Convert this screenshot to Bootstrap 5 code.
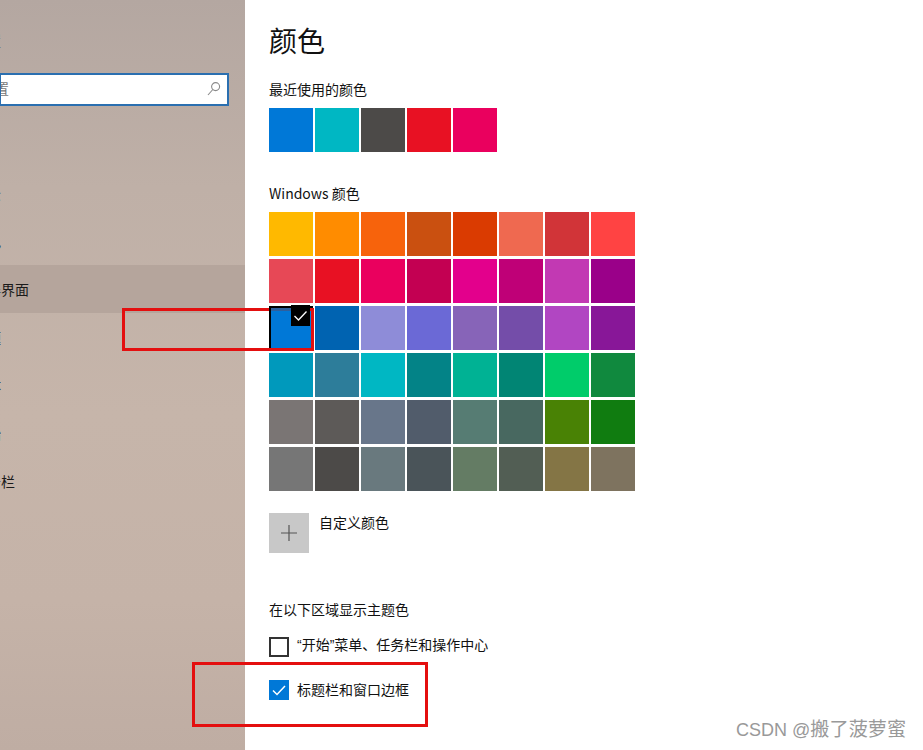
<!DOCTYPE html>
<html lang="zh-CN">
<head>
<meta charset="utf-8">
<title>颜色</title>
<link href="https://cdn.jsdelivr.net/npm/bootstrap@5.3.0/dist/css/bootstrap.min.css" rel="stylesheet">
<style>
html,body{height:100%;margin:0;overflow:hidden}
body{font-family:"Noto Sans CJK SC","Liberation Sans",sans-serif;background:#fff;color:#111;font-size:14px;width:923px;height:750px;position:relative}
.shell{height:750px}
.side{width:245px;flex:none;overflow:hidden;background:linear-gradient(180deg,#b4a7a1 0,#bfb0a7 25%,#c6b5aa 55%,#c5b3a8 80%,#bfada3 100%)}
.side-head{height:25px;padding-top:24px;line-height:32px;box-sizing:content-box;margin-left:-27px;color:#333}
.searchbox{height:33px;width:230px;margin-left:-1px;border:2px solid #2a6fb0;background:#fff;line-height:26px;margin-top:24px;overflow:hidden}
.searchbox span{margin-left:-6px;color:#777;display:inline-block}
.nav-gap{height:63px}
.sitem{height:48px;line-height:48px;white-space:nowrap;color:#1a1a1a}
.sitem.on{background:#b5a59c}
.sitem span{display:block;margin-left:-27px}
.main-col{padding-left:24px;width:678px}
.ttl{font-size:28px;line-height:40px;margin:0;padding-top:20px;font-weight:400;box-sizing:content-box}
.lbl{font-size:14px;line-height:20px;margin:0}
.lbl1{margin-top:19px}
.lbl2{margin-top:31px}
.lbl3{margin-top:46px}
.swrow{gap:2px}
.sw-stack{gap:3px;margin-top:9px;width:366px}
.recent{margin-top:9px}
.swatch{width:44px;height:44px;flex:none;position:relative}
.swatch.picked{box-shadow:inset 0 0 0 2px #000}
.corner{width:19px;height:21px;background:#000;right:3px;top:-1px;z-index:2}
.tint{left:0;top:2px;width:22px;height:3px;background:#2f5f9c;border-left:2px solid #000;z-index:2}
.addrow{margin-top:22px;height:40px}
.addbtn{width:40px;height:40px;background:#c8c8c8;border:0;padding:0;border-radius:0}
.addtxt{margin-left:10px;line-height:18px}
.ck{width:20px;height:20px;flex:none}
.ck-off{border:2px solid #333}
.ck-on{background:#0078d7}
.ckrow{gap:8px}
.ck1{margin-top:18px;line-height:16px;font-family:"Liberation Sans","Noto Sans CJK SC",sans-serif}
.ck2{margin-top:23px;line-height:18px}
.redbox{position:absolute;border:3px solid #e40f0f;pointer-events:none;z-index:1}
.rb1{left:122px;top:308px;width:192px;height:43px}
.rb2{left:192px;top:662px;width:236px;height:65px}
.mark-wm{position:absolute;left:736px;top:718px;font-size:18px;line-height:24px;color:#999;font-family:"Liberation Sans","Noto Sans CJK SC",sans-serif;white-space:nowrap}
.mark-wm span{font-size:19.2px}
.mag{position:absolute;right:6px;top:6px}
</style>
</head>
<body>
<div class="shell d-flex">
  <aside class="side">
    <div class="side-head">设置</div>
    <div class="searchbox position-relative"><span>置</span>
      <svg class="mag" width="14" height="16" viewBox="0 0 14 16" fill="none" stroke="#8a8a8a" stroke-width="1.1"><circle cx="8.6" cy="5.6" r="4"/><path d="M5.8 8.5 1 14"/></svg>
    </div>
    <div class="nav-gap"></div>
    <div class="sitem"><span>背景</span></div>
    <div class="sitem"><span>颜色</span></div>
    <div class="sitem on"><span>锁屏界面</span></div>
    <div class="sitem"><span>主题</span></div>
    <div class="sitem"><span>字体</span></div>
    <div class="sitem"><span>开始</span></div>
    <div class="sitem"><span>任务栏</span></div>
  </aside>
  <main class="main-col">
    <h1 class="ttl">颜色</h1>
    <p class="lbl lbl1">最近使用的颜色</p>
    <div class="d-flex swrow recent">
      <div class="swatch" style="background:#0078d7"></div><div class="swatch" style="background:#00b7c3"></div><div class="swatch" style="background:#4c4a48"></div><div class="swatch" style="background:#e81123"></div><div class="swatch" style="background:#ea005e"></div>
    </div>
    <p class="lbl lbl2">Windows 颜色</p>
    <div class="d-flex flex-column sw-stack">
      <div class="d-flex swrow">
        <div class="swatch" style="background:#ffb900"></div><div class="swatch" style="background:#ff8c00"></div><div class="swatch" style="background:#f7630c"></div><div class="swatch" style="background:#ca5010"></div><div class="swatch" style="background:#da3b01"></div><div class="swatch" style="background:#ef6950"></div><div class="swatch" style="background:#d13438"></div><div class="swatch" style="background:#ff4343"></div>
      </div>
      <div class="d-flex swrow">
        <div class="swatch" style="background:#e74856"></div><div class="swatch" style="background:#e81123"></div><div class="swatch" style="background:#ea005e"></div><div class="swatch" style="background:#c30052"></div><div class="swatch" style="background:#e3008c"></div><div class="swatch" style="background:#bf0077"></div><div class="swatch" style="background:#c239b3"></div><div class="swatch" style="background:#9a0089"></div>
      </div>
      <div class="d-flex swrow">
        <div class="swatch picked" style="background:#0078d7">
          <div class="tint position-absolute"></div>
          <div class="corner position-absolute d-flex align-items-center justify-content-center">
            <svg width="15" height="12" viewBox="0 0 15 12" fill="none" stroke="#fff" stroke-width="1.3"><path d="M1.5 6 5.5 10 13.5 1.5"/></svg>
          </div>
        </div>
        <div class="swatch" style="background:#0063b1"></div><div class="swatch" style="background:#8e8cd8"></div><div class="swatch" style="background:#6b69d6"></div><div class="swatch" style="background:#8764b8"></div><div class="swatch" style="background:#744da9"></div><div class="swatch" style="background:#b146c2"></div><div class="swatch" style="background:#881798"></div>
      </div>
      <div class="d-flex swrow">
        <div class="swatch" style="background:#0099bc"></div><div class="swatch" style="background:#2d7d9a"></div><div class="swatch" style="background:#00b7c3"></div><div class="swatch" style="background:#038387"></div><div class="swatch" style="background:#00b294"></div><div class="swatch" style="background:#018574"></div><div class="swatch" style="background:#00cc6a"></div><div class="swatch" style="background:#10893e"></div>
      </div>
      <div class="d-flex swrow">
        <div class="swatch" style="background:#7a7574"></div><div class="swatch" style="background:#5d5a58"></div><div class="swatch" style="background:#68768a"></div><div class="swatch" style="background:#515c6b"></div><div class="swatch" style="background:#567c73"></div><div class="swatch" style="background:#486860"></div><div class="swatch" style="background:#498205"></div><div class="swatch" style="background:#107c10"></div>
      </div>
      <div class="d-flex swrow">
        <div class="swatch" style="background:#767676"></div><div class="swatch" style="background:#4c4a48"></div><div class="swatch" style="background:#69797e"></div><div class="swatch" style="background:#4a5459"></div><div class="swatch" style="background:#647c64"></div><div class="swatch" style="background:#525e54"></div><div class="swatch" style="background:#847545"></div><div class="swatch" style="background:#7e735f"></div>
      </div>
    </div>
    <div class="d-flex addrow">
      <button class="addbtn d-flex align-items-center justify-content-center" type="button" aria-label="自定义颜色">
        <svg width="16" height="16" viewBox="0 0 16 16" stroke="#555" stroke-width="1.2"><path d="M8 0v16M0 8h16"/></svg>
      </button>
      <span class="addtxt">自定义颜色</span>
    </div>
    <p class="lbl lbl3">在以下区域显示主题色</p>
    <div class="d-flex ckrow ck1"><span class="ck ck-off"></span><span>“开始”菜单、任务栏和操作中心</span></div>
    <div class="d-flex ckrow ck2"><span class="ck ck-on d-flex align-items-center justify-content-center">
      <svg width="14" height="11" viewBox="0 0 14 11" fill="none" stroke="#fff" stroke-width="1.5"><path d="M1 5.5 5 9.5 13 1"/></svg></span><span>标题栏和窗口边框</span></div>
  </main>
</div>
<div class="redbox rb1"></div>
<div class="redbox rb2"></div>
<div class="mark-wm">CSDN @<span>搬了菠萝蜜</span></div>
</body>
</html>
